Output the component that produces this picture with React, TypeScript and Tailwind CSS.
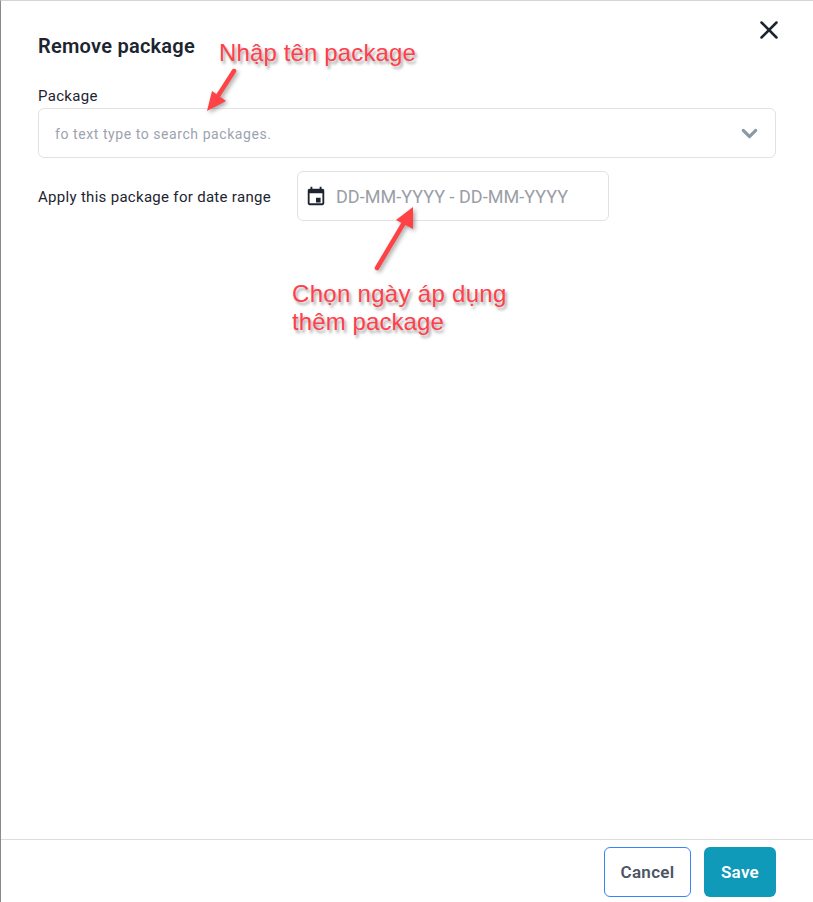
import { ChevronDown, X } from 'lucide-react';

const Arrow = ({ x1, y1, x2, y2, head }: { x1: number; y1: number; x2: number; y2: number; head: string }) => (
  <svg
    className="absolute left-0 top-0 pointer-events-none [filter:drop-shadow(2px_2px_2px_rgba(0,0,0,0.35))]"
    width="813"
    height="902"
    fill="none"
  >
    <line x1={x1} y1={y1} x2={x2} y2={y2} stroke="#ff4245" strokeWidth="4.5" strokeLinecap="round" />
    <polygon points={head} fill="#ff4245" />
  </svg>
);

const Note = ({ className, children }: { className: string; children: React.ReactNode }) => (
  <div
    className={`absolute font-['Liberation_Sans',sans-serif] text-[24px] leading-[28px] text-[#ff3f4c] [text-shadow:2px_3px_3px_rgba(0,0,0,0.35)] ${className}`}
  >
    {children}
  </div>
);

export default function App() {
  return (
    <div className="relative flex h-[902px] w-[813px] flex-col overflow-hidden border-l border-t border-l-[#8a8a8a] border-t-[#d4d4d4] bg-white font-['Roboto',sans-serif] text-[#1c2430]">
      {/* Form */}
      <div className="flex flex-1 flex-col pl-[37px] pr-[37px]">
        <div className="flex items-start justify-between">
          <h2 className="mt-[34px] text-[20px] font-semibold leading-[22px] tracking-[0.25px]">Remove package</h2>
          <button className="mr-[-8px] mt-[14px] text-[#1c2430]">
            <X className="h-[30px] w-[30px]" strokeWidth={2} />
          </button>
        </div>

        <label className="mt-[30px] text-[15px] leading-[18px] tracking-[0.3px]">Package</label>
        <div className="mt-[3px] flex h-[50px] items-center justify-between rounded-md border border-[#e2e2e2] pl-[16px] pr-[13px]">
          <span className="pt-[2px] text-[14px] tracking-[0.57px] text-[#9ca3af]">fo text type to search packages.</span>
          <ChevronDown className="h-[25px] w-[25px] text-[#8c98a4]" strokeWidth={3} />
        </div>

        <div className="mt-[13px] flex items-center">
          <span className="w-[259px] pt-[2px] text-[15px] tracking-[0.3px]">Apply this package for date range</span>
          <div className="flex h-[50px] w-[312px] items-center rounded-md border border-[#e2e2e2] pl-[7px]">
            <svg width="22" height="22" viewBox="0 0 24 24" fill="#1c2430">
              <path d="M19 4h-1V2h-2v2H8V2H6v2H5c-1.1 0-2 .9-2 2v14c0 1.1.9 2 2 2h14c1.1 0 2-.9 2-2V6c0-1.1-.9-2-2-2zm0 16H5V9h14v11zm-2-6h-5v5h5v-5z" />
            </svg>
            <span className="ml-[9px] text-[18px] tracking-[0.03px] text-[#9a9ea6]">DD-MM-YYYY - DD-MM-YYYY</span>
          </div>
        </div>
      </div>

      {/* Footer */}
      <div className="flex h-[63px] items-start justify-end gap-[13px] border-t border-[#dcdcdc] pr-[37px] pt-[7px]">
        <button className="h-[50px] w-[87px] rounded-md border border-[#3b82f6] bg-white pt-[2px] text-[17px] font-semibold tracking-[0.3px] text-[#4b5563]">
          Cancel
        </button>
        <button className="h-[50px] w-[72px] rounded-md bg-[#0e9ab8] pt-[2px] text-[17px] font-semibold tracking-[0.3px] text-white">
          Save
        </button>
      </div>

      {/* Annotations drawn over the form */}
      <Note className="left-[218px] top-[38px] tracking-[0.14px]">Nhập tên package</Note>
      <Note className="left-[291px] top-[279px] tracking-[0.3px]">
        Chọn ngày áp dụng
        <br />
        <span className="tracking-[0.1px]">thêm package</span>
      </Note>
      <div className="absolute left-[-1px] top-[-1px]">
        <Arrow x1={234} y1={71} x2={216} y2={99} head="207,111 212,91 226,101" />
        <Arrow x1={377} y1={268} x2={405} y2={221} head="413,207 413,229 396,220" />
      </div>
    </div>
  );
}
